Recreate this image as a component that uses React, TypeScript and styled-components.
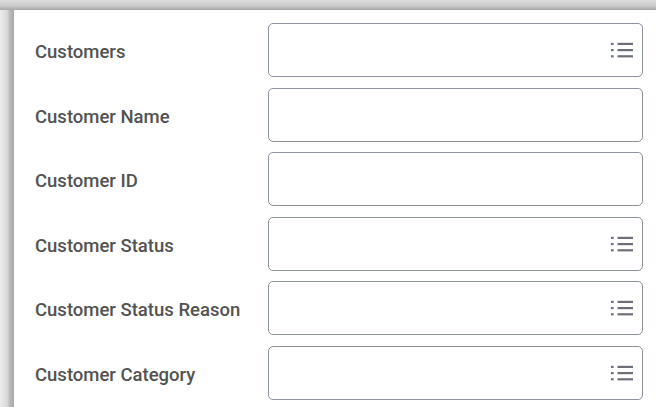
import styled, { createGlobalStyle } from 'styled-components';

const GlobalStyle = createGlobalStyle`
  html, body {
    margin: 0;
    padding: 0;
    background: #fff;
    overflow: hidden;
  }
  body {
    font-family: Roboto, "Liberation Sans", sans-serif;
  }
`;

const Frame = styled.div`
  width: 656px;
  height: 407px;
  overflow: hidden;
  display: flex;
  flex-direction: column;
`;

// shaded strip along the top edge of the window
const TopEdge = styled.div`
  height: 10px;
  flex-shrink: 0;
  background-color: #c4c4c4;
  background-image: linear-gradient(to bottom, #dedede, #cbcbcb 55%, #a8a8a8);
`;

const Body = styled.div`
  flex: 1;
  display: flex;
`;

// shaded strip along the left edge of the window
const LeftEdge = styled.div`
  width: 14px;
  flex-shrink: 0;
  background-image: linear-gradient(to right, #ececec, #dadada 50%, #b8b8b8 72%, #a9a9a9);
`;

const Card = styled.div`
  flex: 1;
  background: #fff;
  padding: 13px 0 0 21px;
  display: flex;
  flex-direction: column;
  gap: 10.6px;
`;

const Row = styled.div`
  display: flex;
  align-items: center;
`;

const Label = styled.label`
  width: 233px;
  font-size: 18.5px;
  font-weight: 500;
  color: #525252;
  padding-top: 4px;
`;

const Field = styled.div`
  width: 375px;
  height: 54px;
  box-sizing: border-box;
  border: 1px solid #8d939b;
  border-radius: 5px;
  display: flex;
  align-items: center;
  justify-content: flex-end;
  padding-right: 9px;
`;

const ListIcon = () => (
  <svg width="22" height="16" viewBox="0 0 22 16">
    <g fill="#6b7079">
      <rect x="0" y="0.8" width="2.6" height="2.2" />
      <rect x="0" y="7" width="2.6" height="2.2" />
      <rect x="0" y="13.2" width="2.6" height="2.2" />
      <rect x="6.5" y="0.8" width="15.5" height="2.2" />
      <rect x="6.5" y="7" width="15.5" height="2.2" />
      <rect x="6.5" y="13.2" width="15.5" height="2.2" />
    </g>
  </svg>
);

const fields = [
  { label: 'Customers', list: true },
  { label: 'Customer Name', list: false },
  { label: 'Customer ID', list: false },
  { label: 'Customer Status', list: true },
  { label: 'Customer Status Reason', list: true },
  { label: 'Customer Category', list: true },
];

export default function App() {
  return (
    <>
      <GlobalStyle />
      <Frame>
        <TopEdge />
        <Body>
          <LeftEdge />
          <Card>
            {fields.map((f) => (
              <Row key={f.label}>
                <Label>{f.label}</Label>
                <Field>{f.list && <ListIcon />}</Field>
              </Row>
            ))}
          </Card>
        </Body>
      </Frame>
    </>
  );
}
